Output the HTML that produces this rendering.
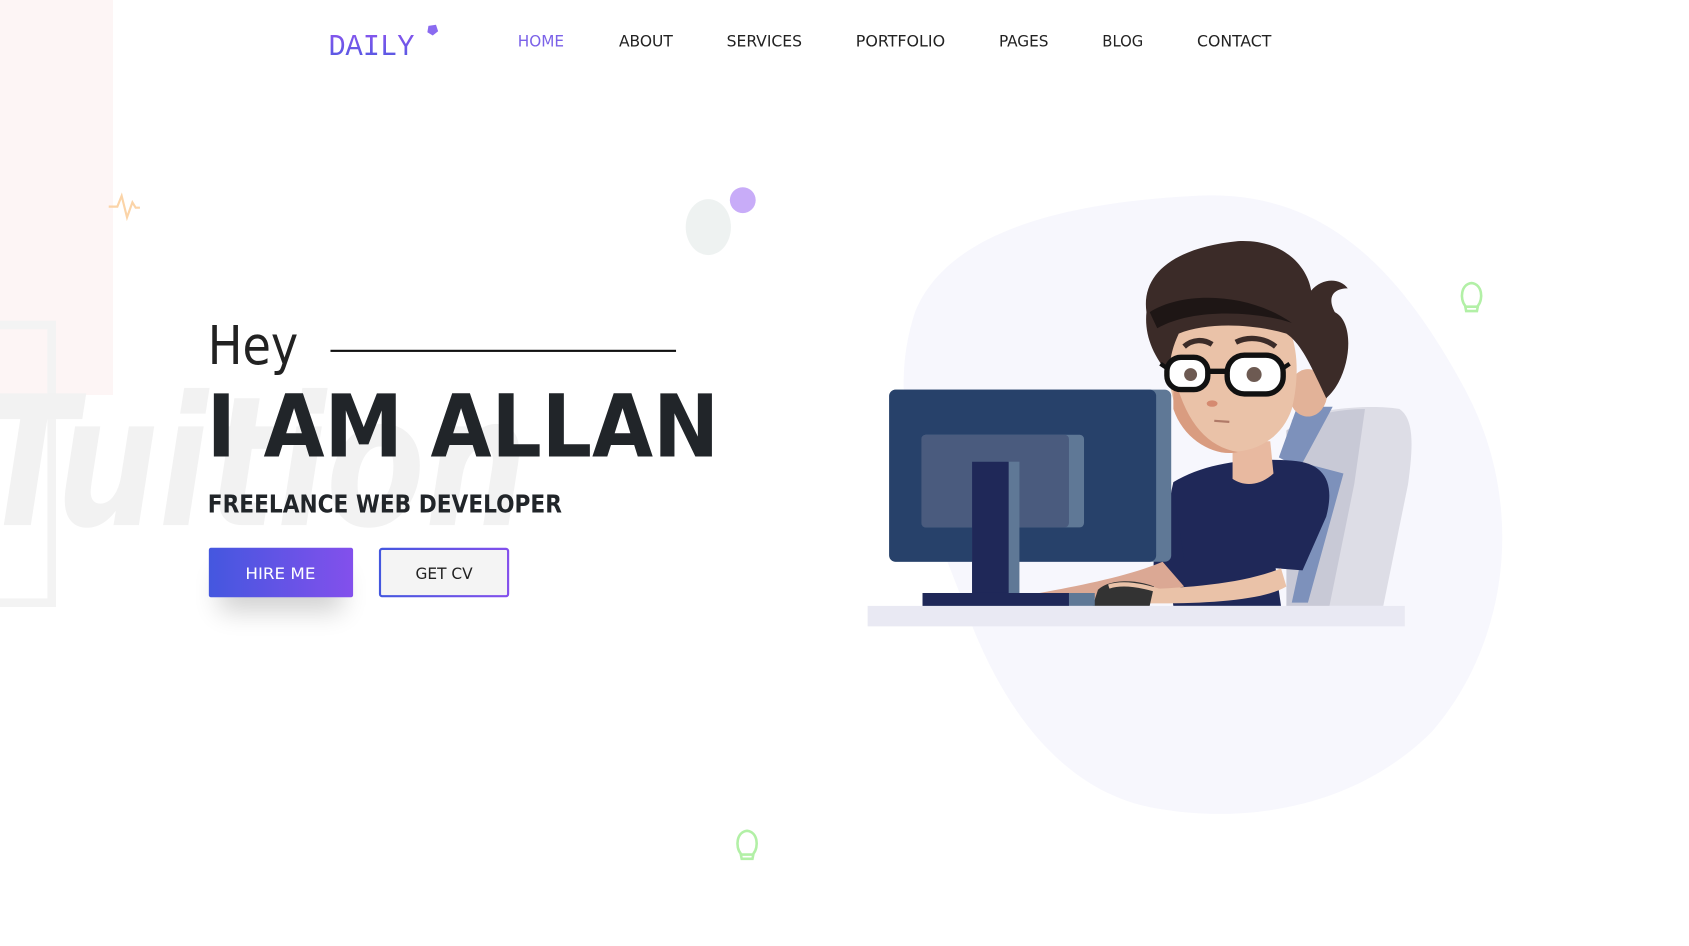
<!DOCTYPE html>
<html><head><meta charset="utf-8"><style>
html,body{margin:0;padding:0;background:#fff;width:1689px;height:946px;overflow:hidden}
svg{display:block}
text{font-family:"DejaVu Sans Condensed","DejaVu Sans","Liberation Sans",sans-serif}
</style></head><body>
<svg width="1689" height="946" viewBox="0 0 1569 879" preserveAspectRatio="none" xmlns="http://www.w3.org/2000/svg">
<defs>
<linearGradient id="g1" x1="0" x2="1"><stop offset="0" stop-color="#4457df"/><stop offset="1" stop-color="#8350ec"/></linearGradient>
<linearGradient id="g2" x1="0" y1="0" x2="0" y2="1"><stop offset="0" stop-color="#8a55ee"/><stop offset="1" stop-color="#4a5ae0"/></linearGradient>
<filter id="sh" x="-50%" y="-50%" width="200%" height="250%"><feGaussianBlur stdDeviation="12"/></filter>
</defs>
<rect width="1569" height="879" fill="#fff"/>
<rect x="0" y="0" width="105" height="367" fill="#fdf5f5"/>
<rect x="-10" y="302" width="58" height="258" fill="none" stroke="#f3f3f3" stroke-width="8"/>
<text x="-20" y="488" font-size="168" font-weight="bold" font-style="italic" fill="#f2f2f2" textLength="510" lengthAdjust="spacingAndGlyphs">Tuition</text>
<text x="305" y="51" font-size="28" style="font-family:'Liberation Mono',monospace" fill="url(#g2)" textLength="80" lengthAdjust="spacingAndGlyphs">DAILY</text>
<polygon points="398,24 405,23 407,29 402,33 397,30" fill="#8a6af0"/>
<g font-size="15" fill="#222">
<text x="481" y="43" fill="#7b62e8" textLength="43" lengthAdjust="spacingAndGlyphs">HOME</text>
<text x="575" y="43" textLength="50" lengthAdjust="spacingAndGlyphs">ABOUT</text>
<text x="675" y="43" textLength="70" lengthAdjust="spacingAndGlyphs">SERVICES</text>
<text x="795" y="43" textLength="83" lengthAdjust="spacingAndGlyphs">PORTFOLIO</text>
<text x="928" y="43" textLength="46" lengthAdjust="spacingAndGlyphs">PAGES</text>
<text x="1024" y="43" textLength="38" lengthAdjust="spacingAndGlyphs">BLOG</text>
<text x="1112" y="43" textLength="69" lengthAdjust="spacingAndGlyphs">CONTACT</text>
</g>
<polyline points="101,192 109,192 113,182 118,202 123,188 126,193 130,193" fill="none" stroke="#fbd4a8" stroke-width="2"/>
<ellipse cx="658" cy="211" rx="21" ry="26" fill="#eef2f1"/>
<circle cx="690" cy="186" r="12" fill="#c8acf8"/>
<path d="M1110,182 C1230,175 1300,250 1360,360 C1420,470 1400,600 1330,680 C1260,750 1160,765 1080,752 C990,740 930,660 895,560 C860,470 820,380 850,290 C880,215 990,188 1110,182 Z" fill="#f7f7fd"/>
<g fill="none" stroke="#b2f0a6" stroke-width="2.4">
<path d="M1361,284 C1356,278 1357,264 1367,263 C1377,264 1378,278 1373,284 L1372,289 L1362,289 Z M1362,285 L1372,285"/>
<path d="M688,793 C683,787 684,773 694,772 C704,773 705,787 700,793 L699,798 L689,798 Z M689,794 L699,794"/>
</g>
<text x="193" y="338" font-size="50" fill="#222" textLength="84" lengthAdjust="spacingAndGlyphs">Hey</text>
<rect x="307" y="325" width="321" height="2" fill="#111"/>
<text x="192" y="424" font-size="80" font-weight="bold" fill="#212529" textLength="476" lengthAdjust="spacingAndGlyphs">I AM ALLAN</text>
<text x="193" y="476" font-size="23" font-weight="bold" fill="#212529" textLength="329" lengthAdjust="spacingAndGlyphs">FREELANCE WEB DEVELOPER</text>
<rect x="204" y="532" width="114" height="36" fill="#000" opacity="0.18" filter="url(#sh)"/>
<rect x="194" y="509" width="134" height="46" rx="2" fill="url(#g1)"/>
<text x="228" y="538" font-size="15" fill="#fff" textLength="65" lengthAdjust="spacingAndGlyphs">HIRE ME</text>
<rect x="353" y="510" width="119" height="44" rx="2" fill="#f4f4f4" stroke="url(#g1)" stroke-width="2"/>
<text x="386" y="538" font-size="15" fill="#222" textLength="53" lengthAdjust="spacingAndGlyphs">GET CV</text>
<path d="M1200,390 C1230,378 1280,376 1300,380 C1315,390 1312,420 1308,450 L1285,563 L1195,563 Z" fill="#dddde6"/>
<path d="M1195,400 C1215,385 1245,380 1268,380 L1258,450 L1235,563 L1195,563 Z" fill="#c8c9d6"/>
<path d="M1205,378 L1238,378 L1210,430 L1248,440 L1215,560 L1200,560 L1225,445 L1188,425 Z" fill="#7d91bb"/>
<path d="M1090,448 C1120,430 1160,425 1200,428 C1232,430 1240,450 1232,480 L1210,530 L1185,528 L1190,563 L1090,563 C1085,530 1080,490 1090,448 Z" fill="#1f2858"/>
<path d="M1090,455 C1075,480 1070,510 1072,540 L1100,520 Z" fill="#1f2858"/>
<path d="M1145,410 L1180,410 L1183,440 C1170,452 1155,452 1145,445 Z" fill="#e8b9a0"/>
<path d="M960,552 C1000,545 1050,535 1080,522 L1100,545 C1060,555 1010,558 960,556 Z" fill="#dba894"/>
<path d="M1030,548 C1080,548 1150,545 1190,528 L1195,545 C1170,560 1100,562 1040,560 Z" fill="#eac2a8"/>
<path d="M1020,548 C1030,538 1055,538 1072,545 L1068,563 L1015,563 Z" fill="#333"/>
<path d="M1030,545 C1045,540 1065,545 1080,550" stroke="#eac2a8" stroke-width="4" fill="none"/>
<ellipse cx="1215" cy="365" rx="18" ry="22" fill="#e2b298"/>
<path d="M1085,300 C1090,280 1130,270 1170,280 C1205,290 1210,340 1200,380 C1190,410 1160,425 1130,418 C1100,410 1088,380 1085,340 Z" fill="#eac2a8"/>
<path d="M1090,345 C1100,390 1120,415 1150,420 C1130,425 1100,410 1090,380 Z" fill="#d99c80"/>
<path d="M1065,290 C1060,255 1090,230 1150,224 C1195,222 1215,250 1218,270 C1228,258 1245,258 1252,268 C1240,268 1232,275 1240,290 C1260,300 1255,350 1232,370 C1220,345 1210,320 1195,310 C1160,300 1120,300 1095,310 C1088,325 1085,340 1088,350 C1070,330 1063,310 1065,290 Z" fill="#3b2b28"/>
<path d="M1068,290 C1100,270 1160,272 1200,300 C1170,290 1110,285 1075,305 Z" fill="#1e1615"/>
<path d="M1100,322 C1108,315 1118,315 1126,320" stroke="#3b2b28" stroke-width="5" fill="none"/>
<path d="M1148,318 C1160,312 1175,314 1185,322" stroke="#3b2b28" stroke-width="5" fill="none"/>
<g fill="#fff" stroke="#111" stroke-width="5">
<rect x="1084" y="332" width="38" height="30" rx="13"/>
<rect x="1140" y="330" width="52" height="36" rx="16"/>
</g>
<path d="M1122,345 L1140,345" stroke="#111" stroke-width="5"/>
<path d="M1192,342 L1198,338 M1084,342 L1078,338" stroke="#111" stroke-width="4"/>
<circle cx="1106" cy="348" r="6" fill="#6d5a52"/>
<circle cx="1165" cy="348" r="7" fill="#6d5a52"/>
<ellipse cx="1126" cy="375" rx="5" ry="3" fill="#d58a70"/>
<path d="M1128,391 L1142,392" stroke="#b07a68" stroke-width="2"/>
<rect x="826" y="362" width="262" height="160" rx="6" fill="#5f7896"/>
<rect x="826" y="362" width="248" height="160" rx="6" fill="#27416a"/>
<rect x="856" y="404" width="151" height="86" rx="4" fill="#5f7896"/>
<rect x="856" y="404" width="137" height="86" rx="4" fill="#4a5b7e"/>
<rect x="903" y="429" width="44" height="122" fill="#5f7896"/>
<rect x="903" y="429" width="34" height="122" fill="#1f2858"/>
<rect x="857" y="551" width="160" height="12" fill="#5f7896"/>
<rect x="857" y="551" width="136" height="12" fill="#1f2858"/>
<rect x="806" y="563" width="499" height="19" fill="#e9e9f3"/>
</svg>
</body></html>
